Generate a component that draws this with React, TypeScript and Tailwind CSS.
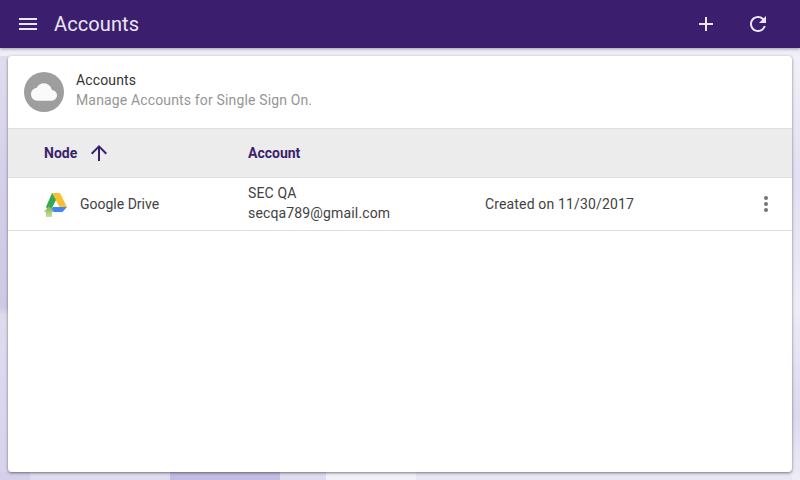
import React from 'react';

const DriveIcon: React.FC = () => (
    <svg width="26" height="26" viewBox="0 0 26 26" className="shrink-0">
        <defs>
            <linearGradient id="upload" x1="0" y1="0" x2="0" y2="1">
                <stop offset="0" stopColor="#7cb342"/>
                <stop offset="1" stopColor="#c5e1a5"/>
            </linearGradient>
        </defs>
        <polygon points="8,2 16,2 23,16 15.5,16" fill="#fbc02d"/>
        <polygon points="8,2 12,9 6,21 2,16" fill="#34a853"/>
        <polygon points="9,16 23,16 18.5,21 6,21" fill="#4285f4"/>
        <polygon points="5,15 10,21 8,21 8,26 2,26 2,21 0,21" fill="url(#upload)"/>
    </svg>
);

const CloudIcon: React.FC = () => (
    <svg width="26" height="26" viewBox="0 0 24 24" fill="#fafafa">
        <path d="M19.35 10.04A7.49 7.49 0 0 0 12 4C9.11 4 6.6 5.64 5.35 8.04A5.994 5.994 0 0 0 0 14c0 3.31 2.69 6 6 6h13c2.76 0 5-2.24 5-5 0-2.64-2.05-4.78-4.65-4.96z"/>
    </svg>
);

const MaterialIcon: React.FC<{ d: string }> = ({d}) => (
    <svg width="24" height="24" viewBox="0 0 24 24" fill="currentColor" className="shrink-0">
        <path d={d}/>
    </svg>
);

const BackgroundArt: React.FC = () => (
    <svg width="800" height="480" viewBox="0 0 800 480" className="absolute inset-0">
        <defs>
            <linearGradient id="leftEdge" x1="0" y1="0" x2="0" y2="1">
                <stop offset="0" stopColor="#e2deef"/>
                <stop offset="0.35" stopColor="#d3cde8"/>
                <stop offset="0.6" stopColor="#cfc9e6"/>
                <stop offset="0.62" stopColor="#dfdbef"/>
                <stop offset="1" stopColor="#d8d3ea"/>
            </linearGradient>
            <linearGradient id="rightEdge" x1="0" y1="0" x2="0" y2="1">
                <stop offset="0" stopColor="#f3f1f9"/>
                <stop offset="0.3" stopColor="#e2dff1"/>
                <stop offset="0.6" stopColor="#eeecf7"/>
                <stop offset="0.85" stopColor="#dcd8ee"/>
                <stop offset="1" stopColor="#eeecf7"/>
            </linearGradient>
        </defs>
        <rect width="800" height="480" fill="#ebe8f5"/>
        <rect x="0" y="48" width="8" height="432" fill="url(#leftEdge)"/>
        <rect x="0" y="472" width="30" height="8" fill="#d5cfe9"/>
        <rect x="30" y="472" width="140" height="8" fill="#e0dcf0"/>
        <polygon points="170,472 280,472 280,480 170,480" fill="#c3bbe2"/>
        <rect x="280" y="472" width="46" height="8" fill="#e0dcf0"/>
        <rect x="326" y="472" width="90" height="8" fill="#f1eff8"/>
        <rect x="416" y="472" width="384" height="8" fill="#e9e6f4"/>
        <rect x="792" y="48" width="8" height="432" fill="url(#rightEdge)"/>
        <rect x="0" y="48" width="800" height="8" fill="#efedf7"/>
    </svg>
);

const App: React.FC = () => {
    return (
        <div className="relative flex h-[480px] w-[800px] flex-col overflow-hidden font-['Roboto',sans-serif]">
            <BackgroundArt/>

            {/* Top bar */}
            <header className="relative flex h-12 shrink-0 items-center bg-[#3b1f6e] pl-[16px] pr-[30px] text-[#ebe6f3] shadow-[0_1px_3px_rgba(0,0,0,0.35)]">
                <MaterialIcon d="M3 18h18v-2H3v2zm0-5h18v-2H3v2zm0-7v2h18V6H3z"/>
                <h1 className="ml-[14px] text-xl leading-none tracking-[0.1px]">Accounts</h1>
                <div className="ml-auto flex items-center gap-7">
                    <MaterialIcon d="M19 13h-6v6h-2v-6H5v-2h6V5h2v6h6v2z"/>
                    <MaterialIcon
                        d="M17.65 6.35A7.958 7.958 0 0 0 12 4c-4.42 0-7.99 3.58-7.99 8s3.57 8 7.99 8c3.73 0 6.84-2.55 7.73-6h-2.08A5.99 5.99 0 0 1 12 18c-3.31 0-6-2.69-6-6s2.69-6 6-6c1.66 0 3.14.69 4.22 1.78L13 11h7V4l-2.35 2.35z"/>
                </div>
            </header>

            {/* Card */}
            <main className="relative mx-2 mb-2 mt-2 flex flex-1 flex-col rounded-sm bg-white shadow-[0_1px_3px_rgba(0,0,0,0.5)]">
                <div className="flex h-[72px] items-center px-4">
                    <div className="flex h-10 w-10 items-center justify-center rounded-full bg-[#9e9e9e]">
                        <CloudIcon/>
                    </div>
                    <div className="mb-1 ml-3 flex flex-col gap-[3px] text-sm leading-[17px] tracking-[0.15px]">
                        <span className="text-[#333]">Accounts</span>
                        <span className="text-[#969696]">Manage Accounts for Single Sign On.</span>
                    </div>
                </div>

                <div className="flex h-[50px] items-center border-y border-[#e0e0e0] bg-[#ececec] pl-9 text-sm font-bold text-[#3b1f6e]">
                    <div className="flex w-[204px] items-center">
                        <span>Node</span>
                        <span className="ml-[10px]">
                            <MaterialIcon d="M4 12l1.41 1.41L11 7.83V20h2V7.83l5.58 5.59L20 12l-8-8-8 8z"/>
                        </span>
                    </div>
                    <span>Account</span>
                </div>

                <div className="flex h-[53px] items-center border-b border-[#e0e0e0] pl-9 pr-6 text-sm tracking-[0.15px] text-[#424242]">
                    <div className="flex w-[204px] items-center">
                        <DriveIcon/>
                        <span className="ml-[10px] tracking-normal">Google Drive</span>
                    </div>
                    <div className="mb-[2px] flex w-[237px] flex-col gap-[3px] leading-[17px]">
                        <span>SEC QA</span>
                        <span>secqa789@gmail.com</span>
                    </div>
                    <span>Created on 11/30/2017</span>
                    <div className="ml-auto flex flex-col gap-[2px]">
                        <span className="h-1 w-1 rounded-full bg-[#757575]"/>
                        <span className="h-1 w-1 rounded-full bg-[#757575]"/>
                        <span className="h-1 w-1 rounded-full bg-[#757575]"/>
                    </div>
                </div>
            </main>
        </div>
    );
};

export default App;
